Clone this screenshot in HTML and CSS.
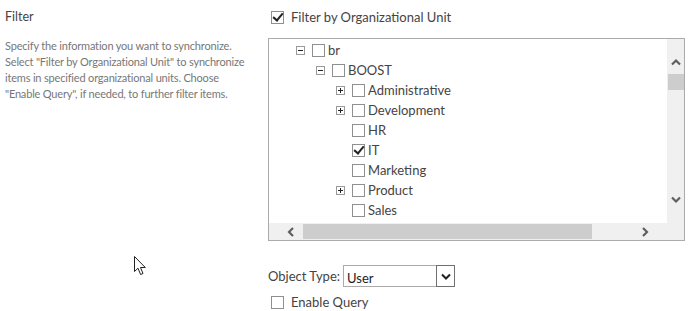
FILE: index.html
```html
<!DOCTYPE html>
<html lang="en">
<head>
    <meta charset="UTF-8">
    <meta name="viewport" content="width=device-width, initial-scale=1.0">
    <title>Filter</title>
    <link rel="stylesheet" href="styles.css">
</head>
<body>
    <div class="page">
        <div class="label-col">
            <div class="section-title">Filter</div>
            <p class="section-desc">
                Specify the information you want to synchronize.<br>
                Select "Filter by Organizational Unit" to synchronize<br>
                items in specified organizational units. Choose<br>
                "Enable Query", if needed, to further filter items.
            </p>
        </div>

        <div class="field-col">
            <label class="check-row">
                <span class="cb checked"></span>
                <span>Filter by Organizational Unit</span>
            </label>

            <div class="tree-box">
                <div class="tree-view">
                    <ul class="tree">
                        <li class="node lvl-0"><span class="toggle minus"></span><span class="cb"></span><span class="node-text">br</span></li>
                        <li class="node lvl-1"><span class="toggle minus"></span><span class="cb"></span><span class="node-text">BOOST</span></li>
                        <li class="node lvl-2"><span class="toggle plus"></span><span class="cb"></span><span class="node-text">Administrative</span></li>
                        <li class="node lvl-2"><span class="toggle plus"></span><span class="cb"></span><span class="node-text">Development</span></li>
                        <li class="node lvl-2"><span class="toggle none"></span><span class="cb"></span><span class="node-text">HR</span></li>
                        <li class="node lvl-2"><span class="toggle none"></span><span class="cb checked"></span><span class="node-text">IT</span></li>
                        <li class="node lvl-2"><span class="toggle none"></span><span class="cb"></span><span class="node-text">Marketing</span></li>
                        <li class="node lvl-2"><span class="toggle plus"></span><span class="cb"></span><span class="node-text">Product</span></li>
                        <li class="node lvl-2"><span class="toggle none"></span><span class="cb"></span><span class="node-text">Sales</span></li>
                    </ul>
                </div>

                <!-- fake scrollbars, drawn like the old IE ones -->
                <div class="vbar">
                    <svg class="arrow" width="12" height="12" viewBox="0 0 12 12"><polyline points="2,8.5 6,4.5 10,8.5" /></svg>
                    <div class="vthumb"></div>
                    <div class="spacer"></div>
                    <svg class="arrow" width="12" height="12" viewBox="0 0 12 12"><polyline points="2,3.5 6,7.5 10,3.5" /></svg>
                </div>
                <div class="hbar">
                    <svg class="arrow" width="12" height="12" viewBox="0 0 12 12"><polyline points="8,2 4,6 8,10" /></svg>
                    <div class="hthumb"></div>
                    <div class="spacer"></div>
                    <svg class="arrow" width="12" height="12" viewBox="0 0 12 12"><polyline points="4,2 8,6 4,10" /></svg>
                </div>
                <div class="corner"></div>
            </div>

            <div class="object-type">
                <span>Object Type:</span>
                <div class="select">
                    <span class="select-value">User</span>
                    <span class="select-btn">
                        <svg width="12" height="9" viewBox="0 0 12 9"><polyline points="2,2.5 6,6.5 10,2.5" /></svg>
                    </span>
                </div>
            </div>

            <label class="check-row query-row">
                <span class="cb"></span>
                <span>Enable Query</span>
            </label>
        </div>

        <svg class="cursor" width="13" height="20" viewBox="0 0 13 20">
            <path d="M0.5,0.5 L0.5,15.5 L4,12.2 L6.6,18.5 L9,17.5 L6.5,11.5 L11.3,11.5 Z" />
        </svg>
    </div>
</body>
</html>
```

FILE: styles.css
```css
body {
    margin: 0;
    padding: 0;
    background-color: #ffffff;
    font-family: Lato, "Noto Sans", sans-serif;
    color: #444444;
}

.page {
    position: relative;
    display: flex;
    width: 690px;
    height: 311px;
    overflow: hidden;
}

.label-col {
    width: 263px;
    padding: 8px 0 0 5px;
    box-sizing: border-box;
}

.section-title {
    font-size: 12.5px;
    line-height: 18px;
}

.section-desc {
    margin: 12px 0 0;
    font-size: 11px;
    line-height: 16px;
    letter-spacing: -0.18px;
    color: #777777;
    white-space: nowrap;
}

.field-col {
    padding: 8px 0 0 5px;
}

.check-row {
    display: flex;
    align-items: center;
    height: 18px;
    font-size: 13px;
}

.check-row .cb {
    margin: 0 7px 0 3px;
}

/* checkbox */
.cb {
    display: inline-block;
    position: relative;
    width: 11px;
    height: 11px;
    border: 1px solid #8f8f8f;
    background-color: #ffffff;
    flex-shrink: 0;
}

.cb.checked::after {
    content: "";
    position: absolute;
    left: 3px;
    top: -1px;
    width: 4px;
    height: 8px;
    border: solid #222222;
    border-width: 0 2px 2px 0;
    transform: rotate(40deg);
}

/* tree box */
.tree-box {
    display: grid;
    grid-template-columns: 398px 17px;
    grid-template-rows: 184px 17px;
    width: 415px;
    margin-top: 12px;
    border: 1px solid #ababab;
}

.tree-view {
    background-color: #ffffff;
    overflow: hidden;
}

.tree {
    list-style: none;
    margin: 0;
    padding: 1px 0 0 27px;
}

.node {
    display: flex;
    align-items: center;
    height: 20px;
    font-size: 13px;
}

.lvl-1 {
    padding-left: 20px;
}

.lvl-2 {
    padding-left: 40px;
}

.toggle {
    position: relative;
    width: 7px;
    height: 7px;
    margin-right: 7px;
    border: 1px solid #9a9a9a;
    flex-shrink: 0;
}

.toggle.none {
    border-color: transparent;
}

.toggle.minus::before,
.toggle.plus::before {
    content: "";
    position: absolute;
    left: 1px;
    top: 3px;
    width: 5px;
    height: 1px;
    background-color: #222222;
}

.toggle.plus::after {
    content: "";
    position: absolute;
    left: 3px;
    top: 1px;
    width: 1px;
    height: 5px;
    background-color: #222222;
}

.node .cb {
    margin-right: 3px;
}

.node-text {
    line-height: 20px;
}

/* scrollbars */
.vbar,
.hbar,
.corner {
    background-color: #f0f0f0;
}

.vbar {
    display: flex;
    flex-direction: column;
    align-items: center;
    padding: 17px 0;
    box-sizing: border-box;
}

.hbar {
    display: flex;
    align-items: center;
    padding: 0 16px;
    box-sizing: border-box;
}

.spacer {
    flex: 1;
}

.arrow {
    flex-shrink: 0;
}

.arrow polyline {
    fill: none;
    stroke: #5f5f5f;
    stroke-width: 2.2;
}

.vthumb {
    width: 16px;
    height: 16px;
    margin-top: 6px;
    margin-left: 1px;
    background-color: #cdcdcd;
}

.hthumb {
    width: 289px;
    height: 15px;
    margin-left: 6px;
    background-color: #cdcdcd;
}

/* object type */
.object-type {
    display: flex;
    align-items: center;
    margin-top: 24px;
    font-size: 13px;
}

.select {
    display: flex;
    width: 110px;
    height: 20px;
    margin-left: 3px;
    border: 1px solid #ababab;
}

.select-value {
    flex: 1;
    padding: 3px 0 0 3px;
    line-height: 18px;
    color: #222222;
}

.select-btn {
    display: flex;
    align-items: center;
    justify-content: center;
    width: 17px;
    border: 1px solid #707070;
    margin: -1px -1px -1px 0;
    background-color: #ffffff;
}

.select-btn polyline {
    fill: none;
    stroke: #222222;
    stroke-width: 2;
}

.query-row {
    margin-top: 6px;
}

.cursor {
    position: absolute;
    left: 134px;
    top: 256px;
}

.cursor path {
    fill: #ffffff;
    stroke: #222222;
    stroke-width: 1;
    stroke-linejoin: round;
}
```
